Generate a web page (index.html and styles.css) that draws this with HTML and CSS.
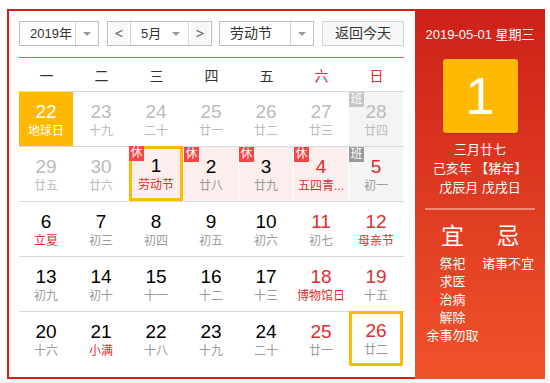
FILE: index.html
```html
<!DOCTYPE html>
<html lang="zh">
<head>
<meta charset="utf-8">
<link rel="stylesheet" href="styles.css">
</head>
<body>
<div class="page">
  <div class="calendar">
    <div class="main">
      <div class="toolbar">
        <div class="select year"><span class="sel-text">2019年</span><span class="sel-arrow"><i class="tri"></i></span></div>
        <div class="month-group">
          <span class="nav">&lt;</span>
          <span class="month"><span class="sel-text">5月</span><i class="tri"></i></span>
          <span class="nav">&gt;</span>
        </div>
        <div class="select holiday"><span class="sel-text">劳动节</span><span class="sel-arrow"><i class="tri"></i></span></div>
        <div class="today-btn">返回今天</div>
      </div>
      <div class="weekdays">
        <span>一</span><span>二</span><span>三</span><span>四</span><span>五</span><span class="we">六</span><span class="we">日</span>
      </div>
      <div class="week">
        <div class="day other today-mark"><b>22</b><small>地球日</small></div>
        <div class="day other"><b>23</b><small>十九</small></div>
        <div class="day other"><b>24</b><small>二十</small></div>
        <div class="day other"><b>25</b><small>廿一</small></div>
        <div class="day other"><b>26</b><small>廿二</small></div>
        <div class="day other"><b>27</b><small>廿三</small></div>
        <div class="day other work"><span class="badge ban light">班</span><b>28</b><small>廿四</small></div>
      </div>
      <div class="week">
        <div class="day other"><b>29</b><small>廿五</small></div>
        <div class="day other"><b>30</b><small>廿六</small></div>
        <div class="day rest selected"><span class="badge">休</span><b>1</b><small class="fest">劳动节</small></div>
        <div class="day rest"><span class="badge">休</span><b>2</b><small>廿八</small></div>
        <div class="day rest"><span class="badge">休</span><b>3</b><small>廿九</small></div>
        <div class="day rest"><span class="badge">休</span><b class="red">4</b><small class="fest">五四青...</small></div>
        <div class="day work"><span class="badge ban">班</span><b class="red">5</b><small>初一</small></div>
      </div>
      <div class="week">
        <div class="day"><b>6</b><small class="fest">立夏</small></div>
        <div class="day"><b>7</b><small>初三</small></div>
        <div class="day"><b>8</b><small>初四</small></div>
        <div class="day"><b>9</b><small>初五</small></div>
        <div class="day"><b>10</b><small>初六</small></div>
        <div class="day"><b class="red">11</b><small>初七</small></div>
        <div class="day"><b class="red">12</b><small class="fest">母亲节</small></div>
      </div>
      <div class="week">
        <div class="day"><b>13</b><small>初九</small></div>
        <div class="day"><b>14</b><small>初十</small></div>
        <div class="day"><b>15</b><small>十一</small></div>
        <div class="day"><b>16</b><small>十二</small></div>
        <div class="day"><b>17</b><small>十三</small></div>
        <div class="day"><b class="red">18</b><small class="fest">博物馆日</small></div>
        <div class="day"><b class="red">19</b><small>十五</small></div>
      </div>
      <div class="week">
        <div class="day"><b>20</b><small>十六</small></div>
        <div class="day"><b>21</b><small class="fest">小满</small></div>
        <div class="day"><b>22</b><small>十八</small></div>
        <div class="day"><b>23</b><small>十九</small></div>
        <div class="day"><b>24</b><small>二十</small></div>
        <div class="day"><b class="red">25</b><small>廿一</small></div>
        <div class="day selected"><b class="red">26</b><small>廿二</small></div>
      </div>
    </div>
    <div class="panel">
      <div class="p-date">2019-05-01 星期三</div>
      <div class="p-big">1</div>
      <div class="p-lunar">
        <div>三月廿七</div>
        <div>己亥年 【猪年】</div>
        <div>戊辰月 戊戌日</div>
      </div>
      <div class="p-line"></div>
      <div class="p-yiji">
        <div class="p-head">宜</div>
        <div class="p-head">忌</div>
        <div class="p-list">
          <div>祭祀</div><div>求医</div><div>治病</div><div>解除</div><div>余事勿取</div>
        </div>
        <div class="p-list">
          <div>诸事不宜</div>
        </div>
      </div>
    </div>
  </div>
</div>
</body>
</html>
```

FILE: styles.css
```css
html, body {
  margin: 0;
  padding: 0;
  background: #fff;
}
body {
  font-family: "Liberation Sans", "Noto Sans CJK SC", sans-serif;
  color: #333;
}
.page {
  width: 550px;
  height: 383px;
  padding: 9px 5px 0 7px;
  box-sizing: border-box;
  background: linear-gradient(#fff 379px, #f4f4f4 379px);
}
.calendar {
  display: flex;
  height: 370px;
}
.main {
  width: 408px;
  box-sizing: border-box;
  border: 2px solid #cd2119;
  border-right: 0;
  padding: 10px 11px 11px 10px;
}
.toolbar {
  display: flex;
  align-items: center;
  height: 25px;
  padding-bottom: 11px;
  border-bottom: 1px solid #e8574f;
  font-size: 13px;
}
.select {
  display: flex;
  height: 25px;
  box-sizing: border-box;
  border: 1px solid #bdbdbd;
  background: #fff;
}
.sel-text {
  line-height: 23px;
  color: #333;
}
.year { width: 80px; }
.year .sel-text { width: 55px; padding-left: 10px; box-sizing: border-box; }
.sel-arrow {
  flex: 1;
  border-left: 1px solid #d6d6d6;
  display: flex;
  align-items: center;
  justify-content: center;
}
.tri {
  display: block;
  width: 0;
  height: 0;
  border-left: 4px solid transparent;
  border-right: 4px solid transparent;
  border-top: 4px solid #999;
}
.month-group {
  display: flex;
  height: 25px;
  box-sizing: border-box;
  border: 1px solid #bdbdbd;
  margin-left: 8px;
  width: 105px;
}
.nav {
  width: 22px;
  background: #f7f7f7;
  color: #666;
  text-align: center;
  line-height: 22px;
  font-size: 14px;
  font-family: "DejaVu Sans", sans-serif;
  transform: scaleX(0.8);
}
.month {
  flex: 1;
  display: flex;
  align-items: center;
  justify-content: space-between;
  padding: 0 8px 0 10px;
  border-left: 1px solid #d6d6d6;
  border-right: 1px solid #d6d6d6;
}
.holiday {
  width: 95px;
  margin-left: 7px;
}
.holiday .sel-text { width: 70px; padding-left: 10px; box-sizing: border-box; font-size: 14px; }
.today-btn {
  margin-left: auto;
  width: 82px;
  height: 25px;
  box-sizing: border-box;
  border: 1px solid #d3d3d3;
  background: #f7f7f7;
  text-align: center;
  line-height: 23px;
  font-size: 14px;
  color: #333;
}
.weekdays {
  display: grid;
  grid-template-columns: repeat(7, 55px);
  height: 33px;
  align-items: center;
  font-size: 14px;
  color: #333;
}
.weekdays span { text-align: center; }
.weekdays .we { color: #e02d2d; }
.week {
  display: grid;
  grid-template-columns: repeat(7, 55px);
  height: 55px;
  box-sizing: border-box;
  border-top: 1px solid #d9d9d9;
}
.day {
  position: relative;
  width: 54px;
  height: 54px;
  box-sizing: border-box;
  padding-top: 9px;
  text-align: center;
}
.day b {
  display: block;
  font-weight: normal;
  font-size: 19px;
  line-height: 22px;
  color: #000;
}
.day small {
  display: block;
  font-size: 12px;
  line-height: 16px;
  color: #999;
  white-space: nowrap;
}
.day b.red, .day small.fest { color: #e02d2d; }
.other b, .other small { color: #bbb; }
.today-mark { background: #ffb900; }
.today-mark b, .today-mark small { color: #fff; }
.rest { background: #fdeeee; }
.work { background: #f4f4f4; }
.selected {
  border: 3px solid #ffbb00;
  padding-top: 6px;
  height: 55px;
  margin-top: -1px;
}
.badge {
  position: absolute;
  left: 0;
  top: 0;
  width: 15px;
  height: 15px;
  line-height: 15px;
  font-size: 12px;
  color: #fff;
  background: #f54545;
  text-align: center;
}
.selected .badge { left: -3px; top: -3px; }
.badge.ban { background: #999; }
.badge.ban.light { background: #c4c4c4; }
.panel {
  width: 130px;
  height: 370px;
  background: linear-gradient(#cd2119, #f0532a);
  color: #fff;
  display: flex;
  flex-direction: column;
  align-items: center;
  padding-top: 17px;
  box-sizing: border-box;
}
.p-date {
  font-size: 13px;
  line-height: 18px;
}
.p-big {
  margin-top: 15px;
  width: 75px;
  height: 74px;
  background: #ffb900;
  border-radius: 3px;
  font-size: 52px;
  line-height: 74px;
  text-align: center;
  box-shadow: 0 1px 2px rgba(120, 20, 0, 0.3);
}
.p-lunar {
  margin-top: 7px;
  font-size: 13px;
  line-height: 19px;
  text-align: center;
}
.p-line {
  margin-top: 11px;
  width: 110px;
  height: 2px;
  background: rgba(255, 255, 255, 0.4);
}
.p-yiji {
  margin-top: 11px;
  display: grid;
  grid-template-columns: 56px 55px;
  text-align: center;
}
.p-head {
  font-size: 23px;
  line-height: 30px;
  margin-bottom: 4px;
}
.p-list {
  font-size: 13px;
  line-height: 18px;
}
```
